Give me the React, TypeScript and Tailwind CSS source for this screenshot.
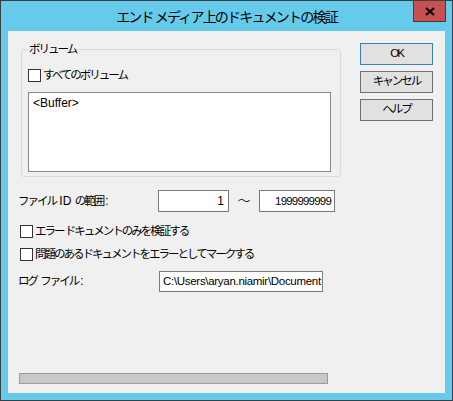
import React from "react";

const jp = "text-[11.5px] tracking-[-2px]";
const lat = "text-[12px] tracking-normal";

function Check({ label, className = "" }: { label: string; className?: string }) {
  return (
    <div className={`flex items-center h-[14px] ${className}`}>
      <span className="w-[13px] h-[13px] border border-[#333333] bg-white shrink-0" />
      <span className={`ml-[2px] leading-[14px] ${jp}`}>{label}</span>
    </div>
  );
}

function Btn({ label, primary }: { label: string; primary?: boolean }) {
  return (
    <button
      className={`w-[73px] h-[22px] bg-[#e1e1e1] leading-none ${jp} border ${
        primary ? "border-[#3c7fb1]" : "border-[#707070]"
      }`}
    >
      {label}
    </button>
  );
}

export default function App() {
  return (
    <div className="w-[453px] h-[401px] border border-[#3b3f42] bg-[#66cbea] flex flex-col text-black font-['Liberation_Sans','Noto_Sans_CJK_JP',sans-serif]">
      {/* title bar */}
      <div className="relative h-[30px] shrink-0 flex items-center justify-center">
        <span className="text-[14px] tracking-[-1.8px] leading-none mt-[1px]">
          エンド メディア上のドキュメントの検証
        </span>
        <div className="absolute right-[6px] top-0 w-[33px] h-[21px] bg-[#c75050] border border-[#5b3131] border-t-0 flex items-center justify-center">
          <svg width="10" height="9" viewBox="0 0 10 9">
            <path d="M1 1 L9 8 M9 1 L1 8" stroke="#000" strokeWidth="2.2" />
          </svg>
        </div>
      </div>

      {/* client */}
      <div className="mx-[7px] h-[362px] bg-[#f0f0f0] flex">
        <div className="w-[345px] flex flex-col">
          <fieldset className="ml-[13px] mt-[11px] w-[320px] h-[135px] border border-[#d5dbe2] rounded-[3px] px-[6px] pb-[5px]">
            <legend className={`px-[1px] leading-[14px] ${jp}`}>ボリューム</legend>
            <Check label="すべてのボリューム" className="mt-[12px]" />
            <div className="mt-[10px] w-[303px] h-[80px] border border-[#828790] bg-white px-[4px] pt-[3px] text-[12px] leading-[14px]">
              &lt;Buffer&gt;
            </div>
          </fieldset>

          <div className="mt-[13px] ml-[10px] flex items-center h-[22px]">
            <span className={`w-[140px] whitespace-pre ${jp}`}>
              ファイル<span className={lat}> ID </span>の範囲<span className={`${lat} ml-[2px]`}>:</span>
            </span>
            <div className="w-[71px] h-[22px] border border-[#7a7a7a] bg-white text-[12px] leading-[20px] text-right pr-[4px]">
              1
            </div>
            <span className="w-[30px] text-center text-[13px] text-[#333]">～</span>
            <div className="w-[76px] h-[22px] border border-[#7a7a7a] bg-white text-[11.5px] leading-[20px] text-right pr-[3px] tracking-[-0.8px]">
              1999999999
            </div>
          </div>

          <Check label="エラー ドキュメントのみを検証する" className="ml-[12px] mt-[12px]" />
          <Check label="問題のあるドキュメントをエラーとしてマークする" className="ml-[12px] mt-[9px]" />

          <div className="mt-[10px] ml-[10px] flex items-center h-[21px]">
            <span className={`w-[141px] whitespace-pre ${jp}`}>
              ログ<span className={lat}> </span>ファイル<span className={`${lat} ml-[2px]`}>:</span>
            </span>
            <div className="w-[164px] h-[21px] border border-[#7a7a7a] bg-white text-[11.5px] tracking-[-0.3px] leading-[19px] pl-[3px] overflow-hidden whitespace-nowrap">
              C:\Users\aryan.niamir\Document
            </div>
          </div>

          <div className="mt-[81px] ml-[11px] w-[309px] h-[11px] bg-[#c9c9c9] border border-[#9c9c9c]" />
        </div>

        <div className="ml-[7px] pt-[12px] flex flex-col gap-[6px]">
          <Btn label="OK" primary />
          <Btn label="キャンセル" />
          <Btn label="ヘルプ" />
        </div>
      </div>
    </div>
  );
}
